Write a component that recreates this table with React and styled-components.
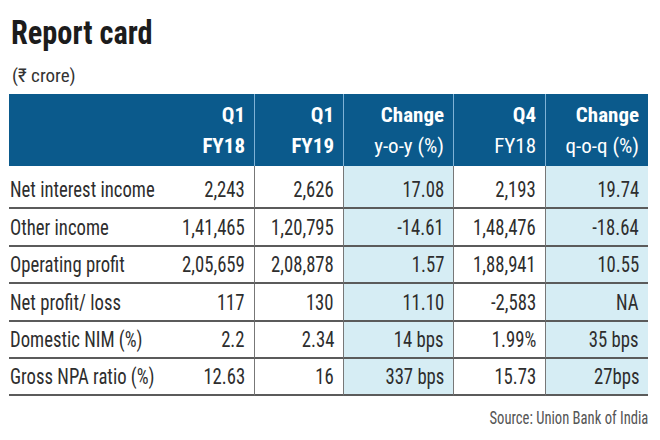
import React from "react";
import styled, { createGlobalStyle } from "styled-components";

const FONT = `"Liberation Sans Narrow", "Roboto Condensed", "Open Sans", sans-serif`;

const Global = createGlobalStyle`
  html, body { margin: 0; padding: 0; background: #fff; }
  body { font-family: ${FONT}; }
`;

const Page = styled.div`
  width: 660px;
  height: 440px;
  box-sizing: border-box;
  padding: 13px 12px 0 9px;
  font-family: ${FONT};
  color: #2e2e2e;
`;

const Squeeze = styled.span`
  display: inline-block;
  white-space: nowrap;
  transform: scaleX(${(p) => p.$sx || 1});
  transform-origin: ${(p) => (p.$right ? "right center" : "left center")};
`;

const Title = styled.h1`
  margin: 0 0 0 2px;
  font-size: 33px;
  line-height: 40px;
  font-weight: 700;
  color: #1c1c1c;
`;

const Unit = styled.div`
  margin: 12px 0 0 3px;
  font-size: 19px;
  line-height: 22px;
  color: #333;
`;

const Grid = styled.div`
  margin-top: 7px;
  display: grid;
  grid-template-columns: 156px 89px 89px 110px 92px 103px;
  grid-template-rows: 72px 43px 38px 37px 38px 37px 37px;
  width: 639px;
`;

const Head = styled.div`
  background: #0b5a8c;
  color: #fff;
  display: flex;
  flex-direction: column;
  justify-content: center;
  align-items: flex-end;
  padding: 2px 9px 0 0;
  border-left: ${(p) => (p.$divider ? "1px solid #7fb2d6" : "none")};
  font-size: 21px;
  line-height: 31px;
`;

const HeadLine = styled.span`
  font-weight: ${(p) => (p.$bold ? 700 : 400)};
`;

const Cell = styled.div`
  display: flex;
  align-items: center;
  justify-content: ${(p) => (p.$label ? "flex-start" : "flex-end")};
  padding: ${(p) => (p.$top ? "5px 9px 0 1px" : "0 9px 0 1px")};
  background: ${(p) => (p.$hl ? "#d6edf4" : "#fff")};
  border-bottom: 2px solid #5b5b5b;
  border-left: ${(p) => (p.$divider ? "1.5px solid #777" : "none")};
  font-size: 22px;
  color: #2e2e2e;
  white-space: nowrap;
`;

const Source = styled.div`
  margin-top: 10px;
  width: 639px;
  text-align: right;
  font-size: 19px;
  color: #555;
`;

const headers = [
  { l1: "", l2: "", b2: true },
  { l1: "Q1", l2: "FY18", b2: true },
  { l1: "Q1", l2: "FY19", b2: true },
  { l1: "Change", l2: "y-o-y (%)", b2: false },
  { l1: "Q4", l2: "FY18", b2: false },
  { l1: "Change", l2: "q-o-q (%)", b2: false },
];

const rows = [
  ["Net interest income", "2,243", "2,626", "17.08", "2,193", "19.74"],
  ["Other income", "1,41,465", "1,20,795", "-14.61", "1,48,476", "-18.64"],
  ["Operating profit", "2,05,659", "2,08,878", "1.57", "1,88,941", "10.55"],
  ["Net profit/ loss", "117", "130", "11.10", "-2,583", "NA"],
  ["Domestic NIM (%)", "2.2", "2.34", "14 bps", "1.99%", "35 bps"],
  ["Gross NPA ratio (%)", "12.63", "16", "337 bps", "15.73", "27bps"],
];

export default function App() {
  return (
    <>
      <Global />
      <Page>
        <Title>
          <Squeeze $sx={0.92}>Report card</Squeeze>
        </Title>
        <Unit>(₹ crore)</Unit>
        <Grid>
          {headers.map((h, i) => (
            <Head key={i} $divider={i >= 2}>
              {h.l1 && <HeadLine $bold>{h.l1}</HeadLine>}
              {h.l2 && <HeadLine $bold={h.b2}>{h.l2}</HeadLine>}
            </Head>
          ))}
          {rows.map((r, ri) =>
            r.map((v, ci) => (
              <Cell
                key={ri + "-" + ci}
                $label={ci === 0}
                $divider={ci >= 2}
                $hl={ci === 3 || ci === 5}
                $top={ri === 0}
              >
                <Squeeze $sx={0.85} $right={ci !== 0}>
                  {v}
                </Squeeze>
              </Cell>
            ))
          )}
        </Grid>
        <Source>
          <Squeeze $sx={0.77} $right>
            Source: Union Bank of India
          </Squeeze>
        </Source>
      </Page>
    </>
  );
}
